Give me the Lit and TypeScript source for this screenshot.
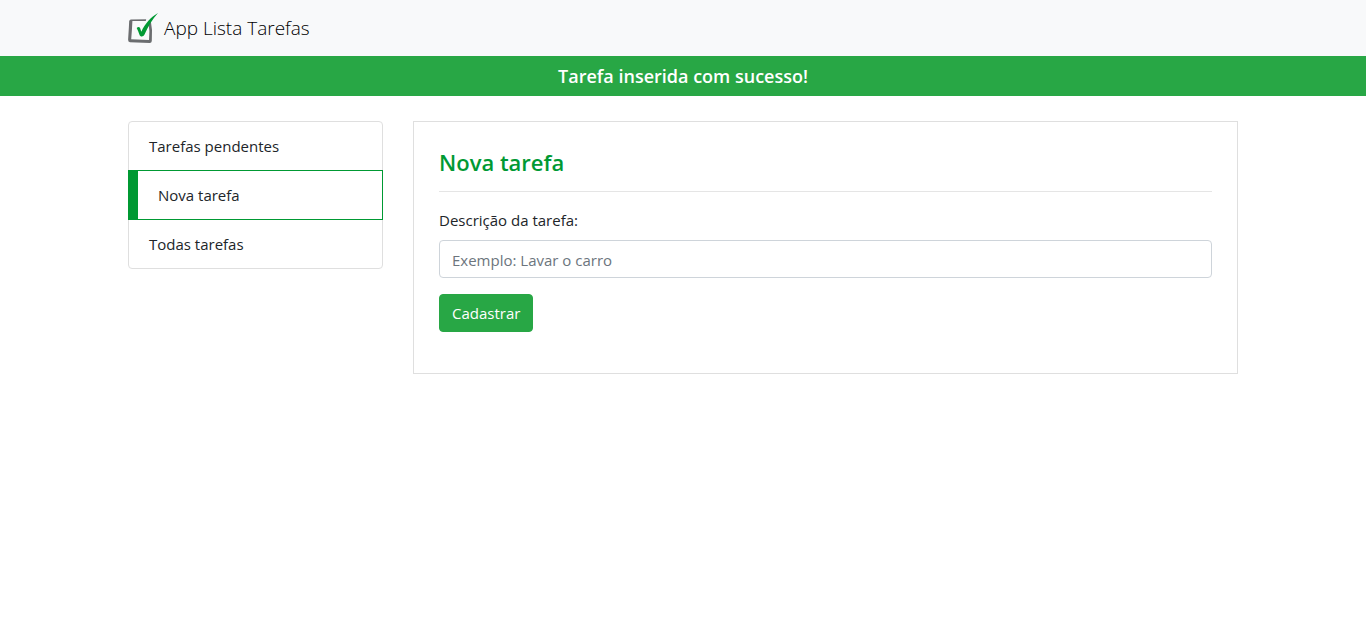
import { LitElement, html, css } from "lit";
import { customElement, property, state } from "lit/decorators.js";
import { classMap } from "lit/directives/class-map.js";

@customElement("task-logo")
class TaskLogo extends LitElement {
  static styles = css`
    :host { display: block; width: 30px; height: 30px; }
    svg { display: block; }
  `;

  render() {
    return html`<svg width="30" height="30" viewBox="0 0 30 30" aria-hidden="true">
      <path fill="#6b6d6f" fill-rule="evenodd" d="M2.6 6.6 L20.4 6.2 Q22.4 6.4 22.8 8 L24 17 L23.8 28 Q23.6 30 21.8 30 L2 29.2 Q0 29 0.1 26.8 L0.9 14 L1.2 7.8 Z M4.4 7.9 L3.9 17 L3.2 26.2 L21 27 L21.4 18 L20.2 8 Z"/>
      <path fill="#f8f9fa" d="M18.4 5 L24 4.4 L21.6 9 L17 12.6 Z"/>
      <path fill="#009933" d="M8.7 14.9 C10.4 13.3 12 13.9 12.5 16.2 L13.3 18.7 C17.4 10.2 22.6 4.1 30 0 C24.5 6.1 20.1 13.4 16.4 21.8 C15 24.1 12.2 24 11.4 21.4 C10.7 19.2 9.8 16.9 8.7 14.9 Z"/>
    </svg>`;
  }
}

@customElement("task-menu")
class TaskMenu extends LitElement {
  @property({ attribute: false }) items: string[] = [];
  @property() current = "";

  static styles = css`
    :host { display: block; }
    .list {
      list-style: none;
      margin: 0;
      padding: 0;
      display: flex;
      flex-direction: column;
    }
    .item {
      border: 1px solid #dfdfdf;
      padding: 12px 20px;
      background: #fff;
    }
    .item + .item { margin-top: -1px; }
    .item:first-child { border-radius: 4px 4px 0 0; }
    .item:last-child { border-radius: 0 0 4px 4px; }
    .active {
      position: relative;
      border-color: #009933;
      border-left-width: 10px;
    }
    .link {
      display: block;
      color: #212529;
      text-decoration: none;
    }
  `;

  render() {
    return html`<ul class="list">
      ${this.items.map((label) => {
        const active = label === this.current;
        return html`<li class=${classMap({ item: true, active })}>
          <a class="link" href="#" aria-current=${active ? "page" : "false"}>${label}</a>
        </li>`;
      })}
    </ul>`;
  }
}

@customElement("app-root")
class AppRoot extends LitElement {
  @state() private message = "Tarefa inserida com sucesso!";

  static styles = css`
    :host {
      display: block;
      background: #fff;
      color: #212529;
      font-family: "Segoe UI", "Open Sans", "Noto Sans", sans-serif;
      font-size: 15px;
      line-height: 24px;
    }
    *, *::before, *::after { box-sizing: border-box; }
    .container {
      width: 100%;
      max-width: 1140px;
      margin: 0 auto;
      padding: 0 15px;
    }
    .navbar { background: #f8f9fa; padding: 8px 0; }
    .brand {
      display: flex;
      width: fit-content;
      align-items: center;
      gap: 6px;
      height: 40px;
      color: #000;
      font-size: 19px;
      font-weight: 300;
      line-height: 30px;
      text-decoration: none;
    }
    .notice {
      background: #28a745;
      color: #fff;
      padding: 8px 0;
      text-align: center;
      font-size: 18px;
      font-weight: 600;
    }
    .notice-text { margin: 0; }
    .layout {
      display: grid;
      grid-template-columns: minmax(0, 255fr) minmax(0, 825fr);
      gap: 30px;
      align-items: start;
      padding-top: 25px;
    }
    .panel { border: 1px solid #dfdfdf; padding: 25px; }
    .title {
      margin: 0;
      color: #009933;
      font-size: 22px;
      line-height: 30px;
      font-weight: 600;
    }
    .rule {
      border: 0;
      border-top: 1px solid #e5e5e5;
      margin: 14px 0 16px;
    }
    .form { margin: 0 0 16px; }
    .label { display: block; margin-bottom: 8px; }
    .input {
      display: block;
      width: 100%;
      height: 38px;
      margin: 0 0 16px;
      padding: 7px 12px 5px;
      border: 1px solid #ced4da;
      border-radius: 4px;
      background: #fff;
      color: #495057;
      font: inherit;
    }
    .input::placeholder { color: #6c757d; opacity: 1; }
    .button {
      display: block;
      height: 38px;
      padding: 6px 12px;
      border: 1px solid #28a745;
      border-radius: 4px;
      background: #28a745;
      color: #fff;
      font: inherit;
      cursor: pointer;
    }
    @media (max-width: 767px) {
      .layout { grid-template-columns: minmax(0, 1fr); }
    }
  `;

  render() {
    return html`
      <nav class="navbar">
        <div class="container">
          <a class="brand" href="#"><task-logo></task-logo>App Lista Tarefas</a>
        </div>
      </nav>
      <div class="notice" role="status"><p class="notice-text">${this.message}</p></div>
      <div class="container">
        <div class="layout">
          <task-menu
            .items=${["Tarefas pendentes", "Nova tarefa", "Todas tarefas"]}
            current="Nova tarefa"
          ></task-menu>
          <main class="panel">
            <h1 class="title">Nova tarefa</h1>
            <hr class="rule" />
            <form class="form" @submit=${(e: Event) => e.preventDefault()}>
              <label class="label" for="task">Descrição da tarefa:</label>
              <input class="input" id="task" type="text" placeholder="Exemplo: Lavar o carro" />
              <button class="button" type="submit">Cadastrar</button>
            </form>
          </main>
        </div>
      </div>
    `;
  }
}
